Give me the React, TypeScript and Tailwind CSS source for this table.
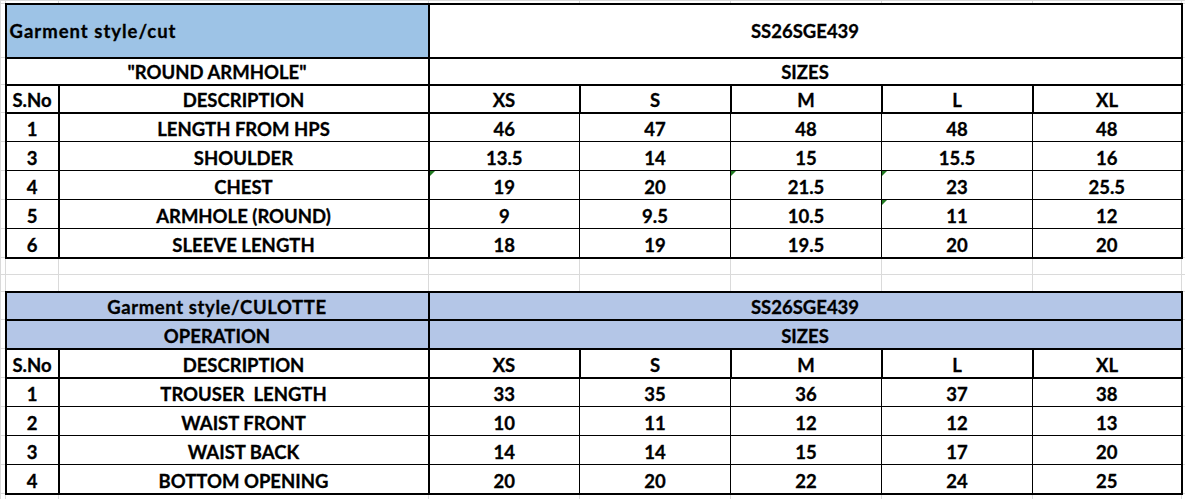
import React from "react";

type Row = { no: string; desc: string; vals: string[]; marks?: number[] };

const SIZES = ["XS", "S", "M", "L", "XL"];

const roundArmhole: Row[] = [
  { no: "1", desc: "LENGTH FROM HPS", vals: ["46", "47", "48", "48", "48"] },
  { no: "3", desc: "SHOULDER", vals: ["13.5", "14", "15", "15.5", "16"] },
  { no: "4", desc: "CHEST", vals: ["19", "20", "21.5", "23", "25.5"], marks: [0, 2, 3] },
  { no: "5", desc: "ARMHOLE (ROUND)", vals: ["9", "9.5", "10.5", "11", "12"], marks: [3] },
  { no: "6", desc: "SLEEVE LENGTH", vals: ["18", "19", "19.5", "20", "20"] },
];

const culotte: Row[] = [
  { no: "1", desc: "TROUSER  LENGTH", vals: ["33", "35", "36", "37", "38"] },
  { no: "2", desc: "WAIST FRONT", vals: ["10", "11", "12", "12", "13"] },
  { no: "3", desc: "WAIST BACK", vals: ["14", "14", "15", "17", "20"] },
  { no: "4", desc: "BOTTOM OPENING", vals: ["20", "20", "22", "24", "25"] },
];

// light spreadsheet gridline cell
function Grid({ span = 1 }: { span?: number }) {
  return <td colSpan={span} className="p-0 border border-[#dadada]" />;
}

function GridRow({ h }: { h: string }) {
  return (
    <tr className={h}>
      {Array.from({ length: 9 }).map((_, i) => (
        <Grid key={i} />
      ))}
    </tr>
  );
}

function Mark() {
  return (
    <span className="absolute left-0 top-0 h-0 w-0 border-t-[5px] border-r-[5px] border-t-[#217a21] border-r-transparent" />
  );
}

function SizeHeader({ h }: { h: string }) {
  return (
    <tr className={h}>
      <Grid />
      <td className="p-0 pb-[2px] align-bottom border-2 border-black">S.No</td>
      <td className="p-0 pb-[2px] align-bottom border-2 border-black">DESCRIPTION</td>
      {SIZES.map((s) => (
        <td key={s} className="p-0 pb-[2px] align-bottom border-2 border-black">
          {s}
        </td>
      ))}
      <Grid />
    </tr>
  );
}

function DataRows({ rows }: { rows: Row[] }) {
  return (
    <>
      {rows.map((r, ri) => {
        const last = ri === rows.length - 1;
        const bb = last ? "border-b-2" : "";
        return (
          <tr key={r.no + r.desc} className="h-[29px]">
            <Grid />
            <td className={`p-0 pb-[2px] align-bottom border border-black border-l-2 border-r-2 ${bb}`}>{r.no}</td>
            <td className={`p-0 pb-[2px] align-bottom border border-black border-r-2 whitespace-pre ${bb}`}>{r.desc}</td>
            {r.vals.map((v, i) => (
              <td
                key={i}
                className={`relative p-0 pb-[2px] align-bottom border border-black ${i === 4 ? "border-r-2" : ""} ${bb}`}
              >
                {r.marks?.includes(i) && <Mark />}
                {v}
              </td>
            ))}
            <Grid />
          </tr>
        );
      })}
    </>
  );
}

export default function App() {
  return (
    <div className="w-[1185px] h-[499px] overflow-hidden bg-white">
      <table className="table-fixed border-collapse w-[1185px] text-center text-black font-['Lato',sans-serif] font-bold text-[18.5px] leading-[20px] [-webkit-text-stroke:0.3px_black]">
        <colgroup>
          <col className="w-[5px]" />
          <col className="w-[53px]" />
          <col className="w-[370px]" />
          <col className="w-[151px]" />
          <col className="w-[151px]" />
          <col className="w-[151px]" />
          <col className="w-[151px]" />
          <col className="w-[149px]" />
          <col className="w-[4px]" />
        </colgroup>
        <tbody>
          <GridRow h="h-[3px]" />

          {/* style / cut */}
          <tr className="h-[54px]">
            <Grid />
            <td colSpan={2} className="p-0 pl-[3px] text-left align-middle tracking-[1px] border-2 border-black bg-[#9dc3e6]">
              Garment style/cut
            </td>
            <td colSpan={5} className="p-0 align-middle border-2 border-black">
              SS26SGE439
            </td>
            <Grid />
          </tr>
          <tr className="h-[27px]">
            <Grid />
            <td colSpan={2} className="p-0 pb-[2px] align-bottom border-2 border-black">
              "ROUND ARMHOLE"
            </td>
            <td colSpan={5} className="p-0 pb-[2px] align-bottom border-2 border-black">
              SIZES
            </td>
            <Grid />
          </tr>
          <SizeHeader h="h-[28px]" />
          <DataRows rows={roundArmhole} />

          <GridRow h="h-[17px]" />
          <GridRow h="h-[17px]" />

          {/* culotte */}
          <tr className="h-[28px]">
            <Grid />
            <td colSpan={2} className="p-0 pb-[2px] align-bottom tracking-[0.6px] border-2 border-black bg-[#b4c6e7]">
              Garment style/CULOTTE
            </td>
            <td colSpan={5} className="p-0 pb-[2px] align-bottom border-2 border-black bg-[#b4c6e7]">
              SS26SGE439
            </td>
            <Grid />
          </tr>
          <tr className="h-[29px]">
            <Grid />
            <td colSpan={2} className="p-0 pb-[2px] align-bottom border-2 border-black bg-[#b4c6e7]">
              OPERATION
            </td>
            <td colSpan={5} className="p-0 pb-[2px] align-bottom border-2 border-black bg-[#b4c6e7]">
              SIZES
            </td>
            <Grid />
          </tr>
          <SizeHeader h="h-[29px]" />
          <DataRows rows={culotte} />

          <GridRow h="h-[6px]" />
        </tbody>
      </table>
    </div>
  );
}
